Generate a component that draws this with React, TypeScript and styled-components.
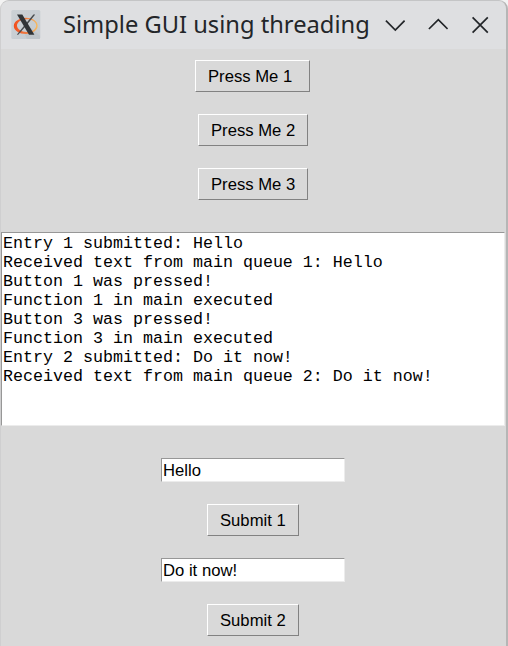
import React from "react";
import styled, { createGlobalStyle } from "styled-components";

const GlobalStyle = createGlobalStyle`
  * { box-sizing: border-box; }
  html, body { margin: 0; background: #f3f3f3; }
`;

const Window = styled.main`
  width: 508px;
  height: 646px;
  overflow: hidden;
  display: flex;
  flex-direction: column;
  background: #d9d9d9;
  border-top: 1px solid #c4c5c6;
  border-left: 1px solid #cfcfd0;
  border-right: 2px solid #b6b6b6;
  border-radius: 9px 9px 0 0;
`;

const TitleBar = styled.header`
  flex: none;
  height: 48px;
  display: flex;
  align-items: center;
  padding-left: 10px;
  background: #dedfe1;
  border-radius: 8px 8px 0 0;
`;

const AppIcon = styled.svg`
  flex: none;
  width: 30px;
  height: 30px;
`;

const Title = styled.h1`
  flex: none;
  margin: 0 0 2px 22px;
  width: 322px;
  font: 400 23.7px/34px "Noto Sans", sans-serif;
  color: #232629;
  white-space: nowrap;
`;

const Controls = styled.div`
  display: flex;
  flex: none;
  gap: 22.5px;
  margin-bottom: 1px;
`;

const ControlIcon = styled.svg`
  width: 20px;
  height: 20px;
  fill: none;
  stroke: #232629;
  stroke-width: 1.7;
`;

const Content = styled.section`
  display: flex;
  flex-direction: column;
  align-items: center;
  padding: 11px 1px 0 0;
  font: 16.67px/19px "Liberation Sans", Arial, sans-serif;
  color: #000;
`;

const PressGroup = styled.div`
  display: flex;
  flex-direction: column;
  align-items: center;
  gap: 22px;

  & > :first-child {
    margin-right: 1px;
  }
`;

const Button = styled.button<{ $width: number }>`
  width: ${({ $width }) => $width}px;
  height: 32px;
  padding: 0 0 0 12px;
  text-align: left;
  white-space: pre;
  font: inherit;
  color: inherit;
  background: #d9d9d9;
  border: 1px solid;
  border-color: #fff #828282 #828282 #fff;
  border-radius: 0;
`;

const Log = styled.div`
  align-self: flex-start;
  width: 504px;
  height: 194px;
  margin-top: 32px;
  padding: 1px;
  background: #fff;
  border: 1px solid;
  border-color: #979797 #ececec #ececec #979797;
  font: 16.67px/19px "Liberation Mono", monospace;
  white-space: pre;
`;

const Form = styled.form`
  display: flex;
  flex-direction: column;
  align-items: center;
  gap: 22px;
  margin-top: 32px;
`;

const Entry = styled.input`
  width: 184px;
  height: 24px;
  padding: 2px 1px 0;
  font: inherit;
  color: inherit;
  background: #fff;
  border: 1px solid;
  border-color: #979797 #ececec #ececec #979797;
  border-radius: 0;
  outline: none;
`;

const logLines = [
  "Entry 1 submitted: Hello",
  "Received text from main queue 1: Hello",
  "Button 1 was pressed!",
  "Function 1 in main executed",
  "Button 3 was pressed!",
  "Function 3 in main executed",
  "Entry 2 submitted: Do it now!",
  "Received text from main queue 2: Do it now!",
];

const controls = [
  { label: "Minimize", path: "M.9 5.7 10.3 15l9.3-9.3" },
  { label: "Maximize", path: "M.9 14 10.3 4.7l9.3 9.3" },
  { label: "Close", path: "M2.6 2.4 17.8 17.6M17.8 2.4 2.6 17.6" },
];

function XLogo() {
  return (
    <AppIcon viewBox="0 0 30 30" aria-hidden="true">
      <defs>
        <linearGradient id="plate" x1="0" y1="0" x2="1" y2="1">
          <stop offset="0" stopColor="#cbd1d5" />
          <stop offset="1" stopColor="#c5cbd0" />
        </linearGradient>
        <linearGradient id="ring">
          <stop offset="0" stopColor="#f24d1c" />
          <stop offset=".5" stopColor="#ee793f" />
          <stop offset="1" stopColor="#f7be62" />
        </linearGradient>
      </defs>
      <rect x=".3" y="0" width="29" height="29" rx="1.5" fill="url(#plate)" />
      <path d="M14 25l6-7 9 8v3H16z" fill="#b9c0c5" opacity=".6" />
      <path
        fillRule="evenodd"
        fill="url(#ring)"
        d="M15 7.8C21.5 7.8 26.7 11.3 26.7 15.8S21.5 24 15 24 2.8 20.6 2.8 16 8.5 7.8 15 7.8zM15.8 9.2C10.4 9.2 6 12 6 15.6s4.2 6.4 9.6 6.4 9.6-2.6 9.6-6.4-4-6.4-9.4-6.4z"
      />
      <path d="M24.2 4.4 16 14.8 7.2 24.8H5.8L14.1 14.5 22.4 4.4z" fill="#464a4d" />
      <path d="M6 4.4h5.3L23.4 24.8h-5.4z" fill="#303437" />
    </AppIcon>
  );
}

export default function App() {
  return (
    <>
      <GlobalStyle />
      <Window>
        <TitleBar>
          <XLogo />
          <Title>Simple GUI using threading</Title>
          <Controls>
            {controls.map(({ label, path }) => (
              <ControlIcon key={label} viewBox="0 0 20 20" aria-label={label}>
                <path d={path} />
              </ControlIcon>
            ))}
          </Controls>
        </TitleBar>
        <Content>
          <PressGroup>
            <Button $width={115}>Press Me 1 </Button>
            <Button $width={110}>Press Me 2</Button>
            <Button $width={110}>Press Me 3</Button>
          </PressGroup>
          <Log>{logLines.join("\n")}</Log>
          <Form onSubmit={(event) => event.preventDefault()}>
            <Entry defaultValue="Hello" />
            <Button $width={92}>Submit 1</Button>
            <Entry defaultValue="Do it now!" />
            <Button $width={92}>Submit 2</Button>
          </Form>
        </Content>
      </Window>
    </>
  );
}
